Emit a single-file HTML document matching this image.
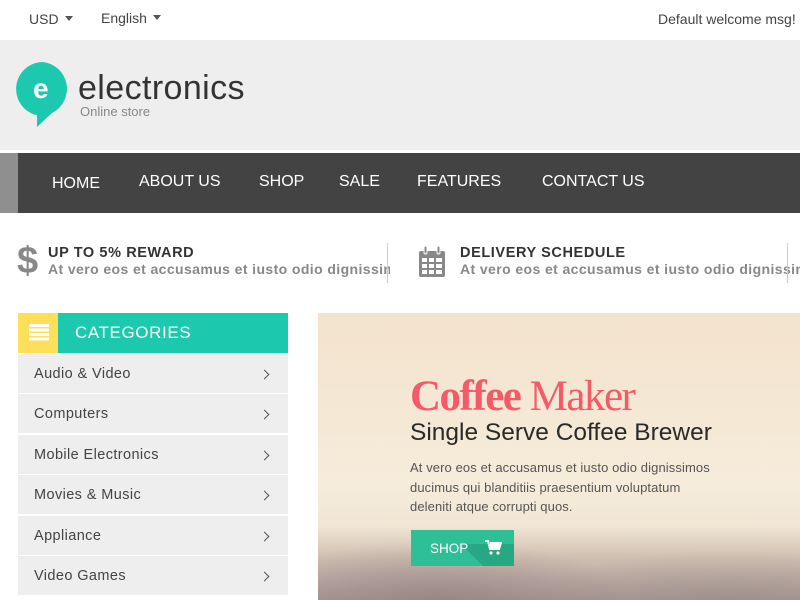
<!DOCTYPE html>
<html><head><meta charset="utf-8"><style>
*{margin:0;padding:0;box-sizing:border-box}
body{width:800px;height:600px;overflow:hidden;background:#fff;font-family:"Liberation Sans",sans-serif;position:relative}
.a{position:absolute}
.top{font-size:14px;color:#444;top:11px}
.tri{display:inline-block;border-left:4px solid transparent;border-right:4px solid transparent;border-top:5px solid #555;margin-left:6px;vertical-align:3px}
.nav span{position:absolute;top:173px;color:#fff;font-size:16px}
.cat{left:18px;width:270px;height:40px;background:#eee;border-bottom:1px solid #fff;font-size:14.5px;color:#444;padding:12px 16px;letter-spacing:.4px}
.cat:after{content:"";position:absolute;right:20px;top:17px;width:6px;height:6px;border-right:1.5px solid #555;border-top:1.5px solid #555;transform:rotate(45deg)}
.ft b{display:block;font-size:14.5px;color:#333;letter-spacing:.6px}
.ft i{display:block;font-style:normal;font-weight:bold;font-size:14px;color:#888;letter-spacing:.4px;white-space:nowrap;overflow:hidden}
</style></head><body>
<div class="a top" style="left:29px">USD<span class="tri"></span></div>
<div class="a top" style="left:101px;top:10px">English<span class="tri"></span></div>
<div class="a top" style="left:658px;white-space:nowrap">Default welcome msg!</div>
<div class="a" style="left:0;top:40px;width:800px;height:110px;background:#eee"></div>
<svg class="a" style="left:16px;top:61px" width="56" height="66" viewBox="0 0 56 66"><path d="M27 1a27 27 0 0 0 -6 53.3l0 11.7 15-14A27 27 0 0 0 27 1z" fill="#1dc9ae"/><text x="17" y="37" font-family="Liberation Sans" font-weight="bold" font-size="28" fill="#fff">e</text></svg>
<div class="a" style="left:78px;top:69px;font-size:34px;color:#333;letter-spacing:.4px">electronics</div>
<div class="a" style="left:80px;top:104px;font-size:13px;color:#888">Online store</div>
<div class="a" style="left:0;top:153px;width:800px;height:60px;background:#434343"></div>
<div class="a" style="left:0;top:153px;width:18px;height:60px;background:#8f8f8f"></div>
<div class="nav"><span style="left:52px;top:175px">HOME</span><span style="left:139px">ABOUT US</span><span style="left:259px">SHOP</span><span style="left:339px">SALE</span><span style="left:417px">FEATURES</span><span style="left:542px">CONTACT US</span></div>
<div class="a" style="left:17px;top:240px;font-size:38px;color:#888;font-weight:bold">$</div>
<div class="a ft" style="left:48px;top:245px;width:342px"><b>UP TO 5% REWARD</b><i>At vero eos et accusamus et iusto odio dignissimos</i></div>
<div class="a" style="left:387px;top:243px;width:1px;height:40px;background:#ccc"></div>
<svg class="a" style="left:418px;top:246px" width="28" height="32" viewBox="0 0 28 32"><rect x="1" y="5" width="26" height="26" rx="2" fill="#888"/><g fill="#fff"><rect x="4" y="12" width="5" height="4"/><rect x="11" y="12" width="5" height="4"/><rect x="18" y="12" width="6" height="4"/><rect x="4" y="18" width="5" height="4"/><rect x="11" y="18" width="5" height="4"/><rect x="18" y="18" width="6" height="4"/><rect x="4" y="24" width="5" height="4"/><rect x="11" y="24" width="5" height="4"/><rect x="18" y="24" width="6" height="4"/><rect x="6" y="0" width="3" height="8" rx="1.5" fill="#888" stroke="#fff"/><rect x="19" y="0" width="3" height="8" rx="1.5" fill="#888" stroke="#fff"/></g></svg>
<div class="a ft" style="left:460px;top:245px;width:340px"><b>DELIVERY SCHEDULE</b><i>At vero eos et accusamus et iusto odio dignissimos</i></div>
<div class="a" style="left:787px;top:243px;width:1px;height:40px;background:#ccc"></div>
<div class="a" style="left:18px;top:313px;width:40px;height:40px;background:#fddf5a"></div>
<div class="a" style="left:29px;top:324px;width:20px;height:17px;background:repeating-linear-gradient(#fff 0 3px,transparent 3px 4.5px)"></div>
<div class="a" style="left:58px;top:313px;width:230px;height:40px;background:#1dc9ae;color:#fff;font-size:17px;padding:10px 17px;letter-spacing:.6px">CATEGORIES</div>
<div class="a cat" style="top:354px">Audio &amp; Video</div>
<div class="a cat" style="top:394px">Computers</div>
<div class="a cat" style="top:435px">Mobile Electronics</div>
<div class="a cat" style="top:475px">Movies &amp; Music</div>
<div class="a cat" style="top:516px">Appliance</div>
<div class="a cat" style="top:556px">Video Games</div>
<div class="a" style="left:318px;top:313px;width:482px;height:287px;background:linear-gradient(180deg,#f3e3cc 0%,#f6ecdb 60%,#f1e6d4 74%,#cdbdb1 86%,#a89895 100%)"></div>
<div class="a" style="left:318px;top:500px;width:482px;height:100px;background:radial-gradient(ellipse 40% 60% at 25% 100%,rgba(140,120,118,.55),transparent),radial-gradient(ellipse 40% 50% at 85% 100%,rgba(150,135,130,.45),transparent)"></div>
<div class="a" style="left:410px;top:372px;font-family:'Liberation Serif',serif;font-size:43px;color:#f45a68;letter-spacing:-1.5px;white-space:nowrap"><b>Coffee</b> Maker</div>
<div class="a" style="left:410px;top:419px;font-size:24.5px;color:#2a2a2a;white-space:nowrap">Single Serve Coffee Brewer</div>
<div class="a" style="left:410px;top:458px;font-size:13px;color:#555;line-height:19.5px;width:312px;letter-spacing:.1px">At vero eos et accusamus et iusto odio dignissimos ducimus qui blanditiis praesentium voluptatum deleniti atque corrupti quos.</div>
<div class="a" style="left:411px;top:530px;width:103px;height:36px;background:#2fbf95;overflow:hidden"><div class="a" style="left:70px;top:14px;width:60px;height:40px;background:#27a883;transform:skewX(45deg)"></div><span class="a" style="left:19px;top:11px;color:#fff;font-size:13.5px">SHOP</span><svg class="a" style="left:74px;top:10px" width="17" height="15" viewBox="0 0 17 15"><path d="M0 1h3l2 8h9l2-6H5" fill="none" stroke="#fff" stroke-width="2"/><path d="M5 3h11l-2 6H5z" fill="#fff"/><circle cx="6" cy="13" r="1.6" fill="#fff"/><circle cx="13" cy="13" r="1.6" fill="#fff"/></svg></div>
</body></html>
